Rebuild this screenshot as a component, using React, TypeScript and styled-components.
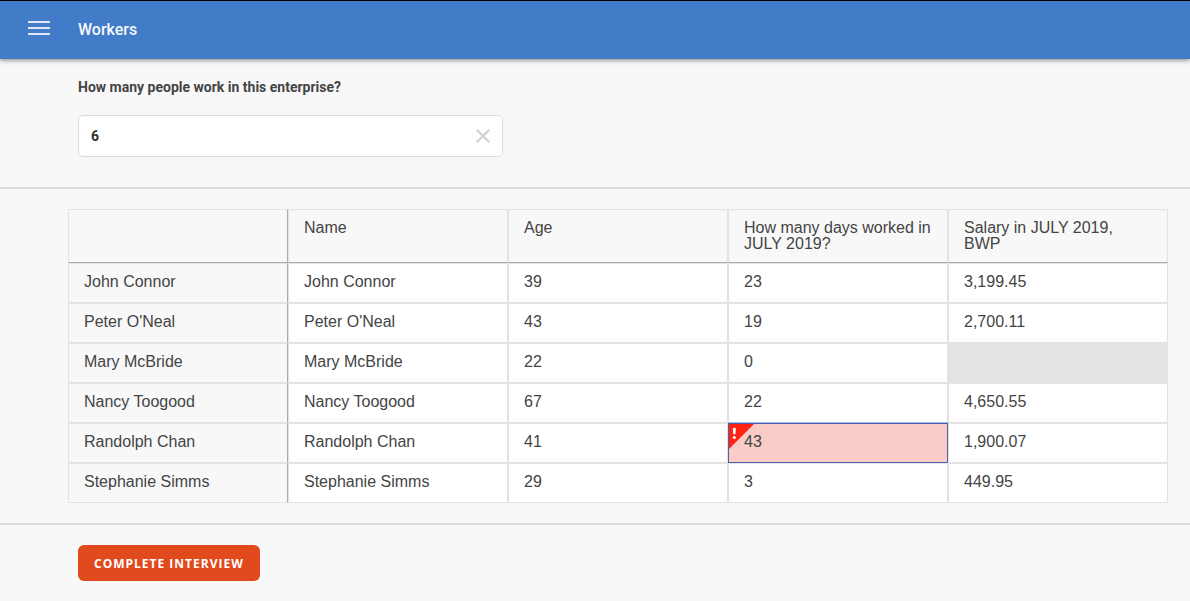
import React, { useState } from "react";
import styled, { createGlobalStyle, css } from "styled-components";

const GlobalStyle = createGlobalStyle`
  *, *::before, *::after { box-sizing: border-box; }
  body {
    margin: 0;
    background: #f8f8f8;
    color: #444;
    font-family: Roboto, "Liberation Sans", sans-serif;
  }
`;

const Header = styled.header`
  display: flex;
  align-items: center;
  gap: 28px;
  height: 59px;
  padding: 0 28px;
  background: #427bc8;
  border-top: 1px solid #000;
  box-shadow: 0 1px 5px rgba(0, 0, 0, 0.5);
`;

const MenuButton = styled.button`
  display: flex;
  flex-direction: column;
  gap: 4px;
  width: 22px;
  margin-top: -4px;
  padding: 0;
  border: 0;
  background: none;
  cursor: pointer;
`;

const MenuBar = styled.span`
  height: 2px;
  width: 100%;
  background: #dfe9f6;
`;

const Title = styled.h1`
  margin: 0;
  color: #f4f8fd;
  font-size: 16px;
  font-weight: 500;
  line-height: 20px;
`;

const Section = styled.section<{ $wide?: boolean }>`
  border-bottom: 2px solid #dadfe3;
  padding: ${(p) => (p.$wide ? "20px 22px 20px 68px" : "18px 22px 30px 78px")};
`;

const Label = styled.label`
  display: block;
  margin-bottom: 18px;
  font-size: 14px;
  font-weight: 700;
  line-height: 20px;
`;

const Field = styled.div`
  display: flex;
  align-items: center;
  max-width: 425px;
  height: 42px;
  padding: 0 12px;
  background: #fff;
  border: 1px solid #dcdcdc;
  border-radius: 5px;
`;

const Input = styled.input`
  flex: 1;
  min-width: 0;
  padding: 0;
  border: 0;
  outline: 0;
  background: none;
  color: #333;
  font: 700 14px Roboto, sans-serif;
`;

const ClearButton = styled.button`
  display: flex;
  padding: 0;
  border: 0;
  background: none;
  cursor: pointer;
`;

const Table = styled.table`
  width: 100%;
  table-layout: fixed;
  border-collapse: separate;
  border-spacing: 0;
  font-family: "Liberation Sans", Arial, sans-serif;
  font-size: 16px;
  line-height: 16px;
`;

const cell = css`
  height: 40px;
  padding: 10px 15px;
  border: 1px solid #e3e3e3;
  font-weight: 400;
  text-align: left;
  vertical-align: top;
`;

const HeadCell = styled.th`
  ${cell}
  height: 54px;
  border-bottom-color: #aaa;

  &:first-child { border-right-color: #aaa; }
`;

const RowHead = styled.th`
  ${cell}
  border-right-color: #aaa;
`;

const Cell = styled.td<{ $state?: "error" | "disabled" }>`
  ${cell}
  background: #fff;
  ${(p) => p.$state === "disabled" && css`background: #e3e3e3;`}
  ${(p) =>
    p.$state === "error" &&
    css`
      position: relative;
      background: #f9ccc8;
      border-color: #4c61a8;
      box-shadow: 0 -1px #a5b8f0;
    `}
`;

const ErrorFlag = styled.svg`
  position: absolute;
  top: 0;
  left: 0;
`;

const CellText = styled.span`
  position: relative;
`;

const Footer = styled.footer`
  padding: 20px 78px;
`;

const CompleteButton = styled.button`
  height: 36px;
  padding: 0 16px;
  border: 0;
  border-radius: 6px;
  background: #e04a1c;
  color: #fff;
  font: 700 12px "Open Sans", sans-serif;
  letter-spacing: 1px;
  text-transform: uppercase;
  cursor: pointer;
`;

const columns = ["Name", "Age", "How many days worked in JULY 2019?", "Salary in JULY 2019, BWP"];

const workers = [
  { name: "John Connor", age: "39", days: "23", salary: "3,199.45" },
  { name: "Peter O'Neal", age: "43", days: "19", salary: "2,700.11" },
  { name: "Mary McBride", age: "22", days: "0", salary: null },
  { name: "Nancy Toogood", age: "67", days: "22", salary: "4,650.55" },
  { name: "Randolph Chan", age: "41", days: "43", salary: "1,900.07" },
  { name: "Stephanie Simms", age: "29", days: "3", salary: "449.95" },
];

const DAYS_IN_JULY = 31;

export default function App() {
  const [count, setCount] = useState("6");

  return (
    <>
      <GlobalStyle />
      <Header>
        <MenuButton type="button" aria-label="Menu">
          <MenuBar />
          <MenuBar />
          <MenuBar />
        </MenuButton>
        <Title>Workers</Title>
      </Header>
      <main>
        <Section>
          <Label htmlFor="people">How many people work in this enterprise?</Label>
          <Field>
            <Input id="people" value={count} onChange={(e) => setCount(e.target.value)} />
            <ClearButton type="button" aria-label="Clear" onClick={() => setCount("")}>
              <svg width="14" height="14" viewBox="0 0 14 14" fill="none" stroke="#d0d0d0" strokeWidth="2">
                <path d="M.7.7l12.6 12.6M13.3.7L.7 13.3" />
              </svg>
            </ClearButton>
          </Field>
        </Section>
        <Section $wide>
          <Table>
            <thead>
              <tr>
                <HeadCell as="td" />
                {columns.map((c) => (
                  <HeadCell key={c} scope="col">{c}</HeadCell>
                ))}
              </tr>
            </thead>
            <tbody>
              {workers.map((w) => {
                const invalid = Number(w.days) > DAYS_IN_JULY;
                return (
                  <tr key={w.name}>
                    <RowHead scope="row">{w.name}</RowHead>
                    <Cell>{w.name}</Cell>
                    <Cell>{w.age}</Cell>
                    <Cell $state={invalid ? "error" : undefined}>
                      {invalid && (
                        <ErrorFlag width="25" height="25" viewBox="0 0 25 25" aria-hidden="true">
                          <path d="M0 0h25L0 25z" fill="#ff2112" />
                          <path d="M3.8 4.8q0-1 1.5-1t1.5 1l-.3 5q-.2.7-1.2.7t-1.2-.7z" fill="#fff" />
                          <circle cx="5.3" cy="13.5" r="1.6" fill="#fff" />
                        </ErrorFlag>
                      )}
                      <CellText>{w.days}</CellText>
                    </Cell>
                    <Cell $state={w.salary === null ? "disabled" : undefined}>{w.salary}</Cell>
                  </tr>
                );
              })}
            </tbody>
          </Table>
        </Section>
      </main>
      <Footer>
        <CompleteButton type="button">Complete interview</CompleteButton>
      </Footer>
    </>
  );
}
